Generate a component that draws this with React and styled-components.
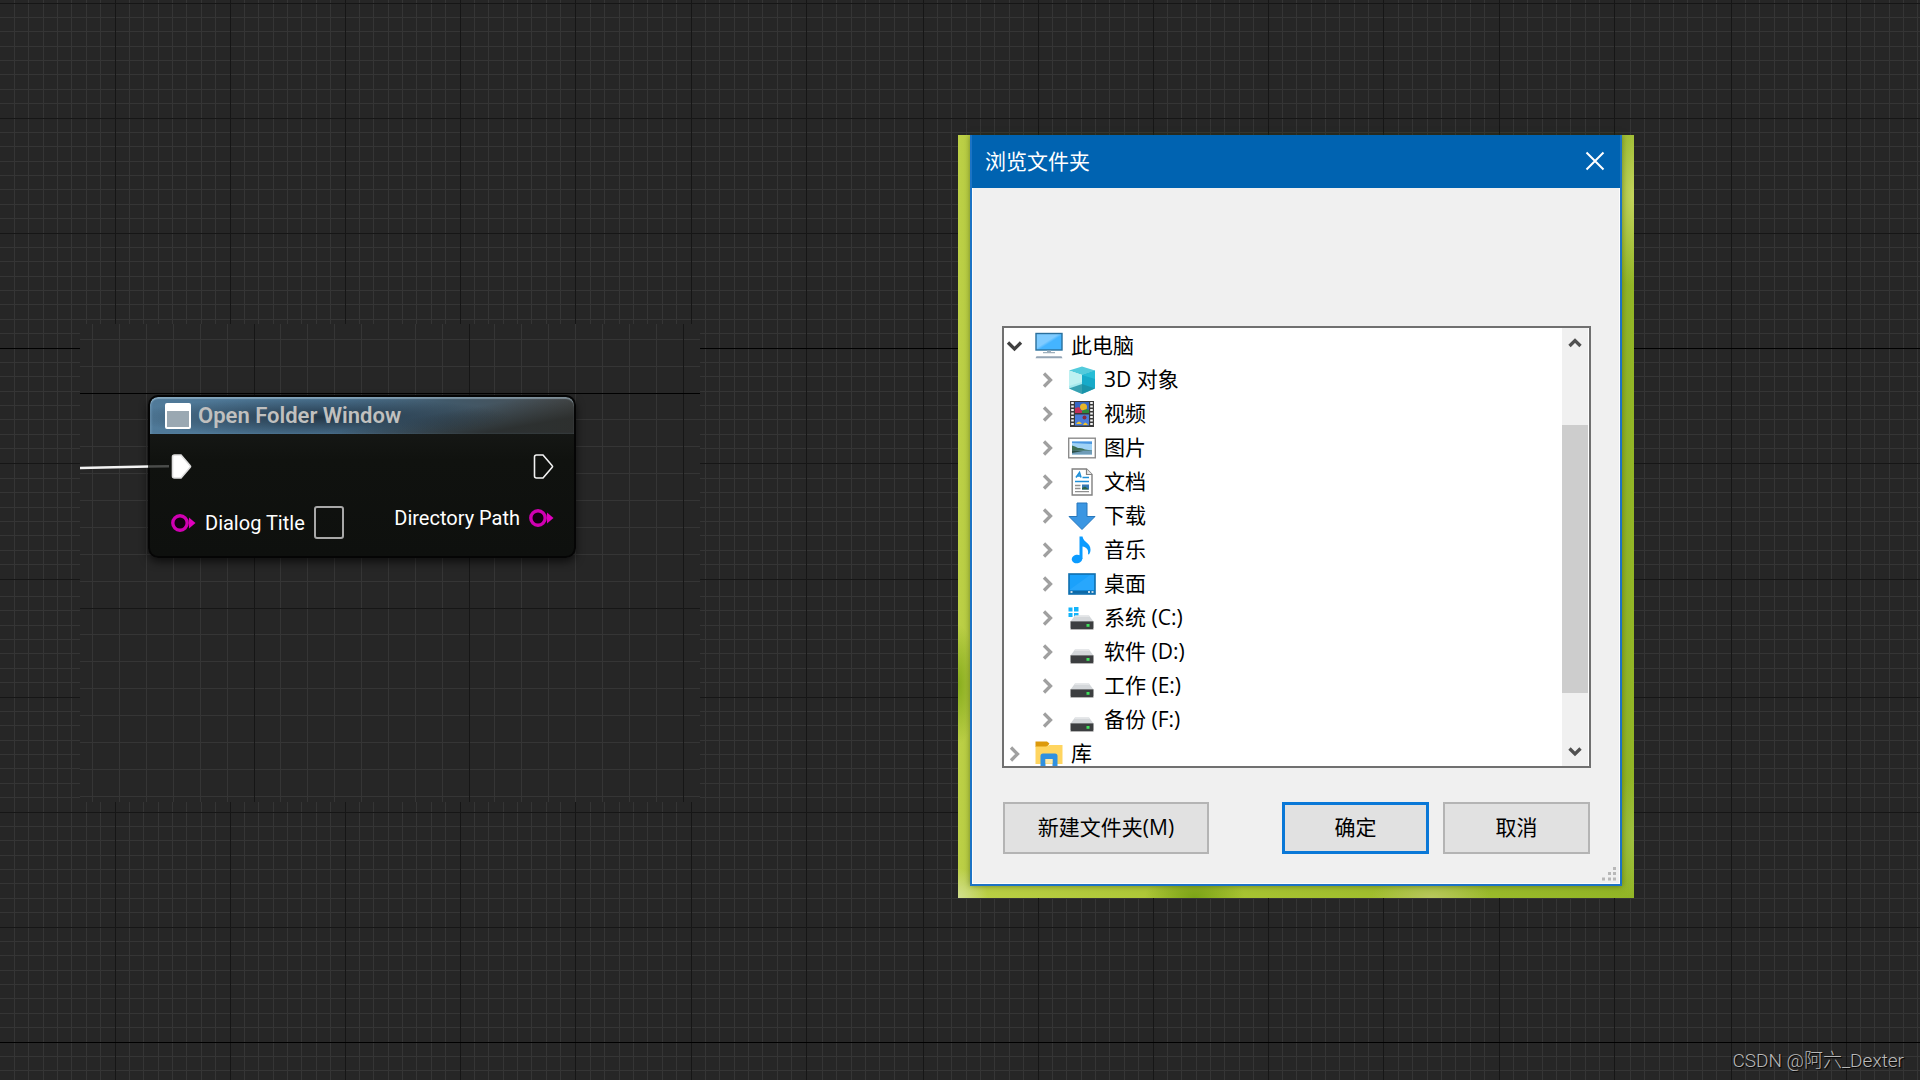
import React, { useState } from "react";
import styled, { createGlobalStyle } from "styled-components";

const GlobalStyle = createGlobalStyle`
    * {
        box-sizing: border-box;
    }

    body {
        margin: 0;
        background-color: #262626;
    }

    button,
    input {
        font: inherit;
        margin: 0;
        padding: 0;
    }
`;

/* ---------- graph background ---------- */

const GridSvg = styled.svg`
    position: absolute;
    inset: 0;
    width: 100%;
    height: 100%;
    z-index: -1;
    background-color: #262626;
`;

// each block ends on a major line and holds 8 cells
const withMinors = (majors, block) =>
    majors.flatMap((m) =>
        [1, 2, 3, 4, 5, 6, 7].map((i) => m - block + Math.floor((block / 8) * i))
    );

function Grid({ xs, ys, axes, block }) {
    return (
        <GridSvg shapeRendering="crispEdges" aria-hidden="true">
            <g fill="#353535">
                {withMinors(xs, block).map((x) => (
                    <rect key={`x${x}`} x={x} y="0" width="1" height="100%" />
                ))}
                {withMinors(ys, block).map((y) => (
                    <rect key={`y${y}`} x="0" y={y} width="100%" height="1" />
                ))}
            </g>
            <g fill="#161616">
                {xs.map((x) => (
                    <rect key={`x${x}`} x={x} y="0" width="1" height="100%" />
                ))}
                {ys.map((y) => (
                    <rect
                        key={`y${y}`}
                        x="0"
                        y={y}
                        width="100%"
                        height="1"
                        fill={axes.includes(y) ? "#000" : undefined}
                    />
                ))}
            </g>
        </GridSvg>
    );
}

const STAGE_X = [
    115, 230, 345, 460, 575, 691, 806, 923, 1038, 1153, 1268, 1383, 1499, 1614,
    1731, 1846, 1961, 2077, 2192, 2307, 2423, 2538, 2653,
];
const STAGE_Y = [
    3, 118, 233, 348, 463, 579, 697, 812, 927, 1042, 1157, 1273, 1388, 1503,
];
const PANEL_X = [174, 389, 603, 818];
const PANEL_Y = [69, 284, 499];

const Stage = styled.main`
    position: relative;
    z-index: 0;
    display: flex;
    justify-content: space-between;
    align-items: flex-start;
    min-height: 100vh;
    padding: 135px 286px 60px 80px;
    overflow: hidden;
`;

const GraphPanel = styled.section`
    position: relative;
    z-index: 0;
    flex: 0 1 620px;
    min-height: 478px;
    margin-top: 189px;
    padding: 71px 68px;
    font-family: Roboto, sans-serif;
`;

const Wire = styled.svg`
    position: absolute;
    left: 0;
    top: 136px;
    width: 90px;
    height: 14px;
`;

/* ---------- blueprint node ---------- */

const Node = styled.article`
    width: 428px;
    max-width: 100%;
    border: 2px solid #050505;
    border-radius: 10px;
    background: linear-gradient(#1c1e1c, #10120f 40%, #0e100e);
    box-shadow: 0 4px 8px rgba(0, 0, 0, 0.6);
    overflow: hidden;
`;

const NodeHeader = styled.header`
    display: flex;
    align-items: center;
    gap: 7px;
    height: 37px;
    padding: 1px 0 0 15px;
    border-radius: 8px 8px 0 0;
    background: radial-gradient(
            ellipse 190px 20px at 40% 55%,
            rgba(22, 34, 46, 0.75),
            transparent
        ),
        linear-gradient(170deg, transparent 60%, rgba(38, 40, 38, 0.8) 85%),
        linear-gradient(90deg, #507a99, #4a7290 45%, #41596a 70%, #4a4e50);
    box-shadow: inset 0 2px 1px rgba(190, 215, 230, 0.45),
        inset 2px 0 2px rgba(130, 170, 200, 0.3);
`;

const NodeTitle = styled.h1`
    margin: 0;
    color: #c0c0bf;
    font-size: 22px;
    font-weight: 600;
    line-height: 26px;
    white-space: nowrap;
`;

const NodeBody = styled.div`
    display: flex;
    justify-content: space-between;
    padding: 20px 20px 17px 21px;
`;

const PinColumn = styled.div`
    display: flex;
    flex-direction: column;
    align-items: ${({ $end }) => ($end ? "flex-end" : "flex-start")};
    gap: 27px;
`;

const Pin = styled.label`
    display: flex;
    align-items: center;
    gap: 9px;
    color: #fff;
    font-size: 20px;
    line-height: 24px;
    white-space: nowrap;
`;

const PinInput = styled.input`
    width: 30px;
    height: 33px;
    border: 2px solid #a8a8a8;
    border-radius: 3px;
    background: transparent;
    color: #fff;
    outline: none;
`;

const WindowGlyph = () => (
    <svg width="26" height="26" viewBox="0 0 26 26">
        <rect x="1" y="1" width="24" height="24" rx="1" fill="#9aa8b2" stroke="#fff" strokeWidth="2" />
        <rect x="1" y="1" width="24" height="7" fill="#fff" />
    </svg>
);

const ExecPin = ({ filled }) => (
    <svg width="21" height="25" viewBox="0 0 21 25">
        <path
            d="M1.5 3Q1.5 1 3.500 1H10L19 11.500Q20 12.500 19 13.500L10 24H3.500Q1.500 24 1.500 22Z"
            fill={filled ? "#fff" : "none"}
            stroke={filled ? "#ddd" : "#f2f2f2"}
            strokeWidth="1.6"
        />
    </svg>
);

const StringPin = () => (
    <svg width="25" height="20" viewBox="0 0 25 20">
        <path d="M18 4.500L24.500 10L18 15.500Z" fill="#e000be" />
        <circle cx="9" cy="10" r="7.200" fill="#120010" stroke="#d000b2" strokeWidth="3.400" />
    </svg>
);

/* ---------- folder dialog ---------- */

const Wallpaper = styled.section`
    flex: 0 1 676px;
    padding: 0 12px 12px;
    background: radial-gradient(ellipse 26px 60px at 100% 92%, #9fc040, transparent),
        radial-gradient(ellipse 40px 90px at 100% 8%, #c3d45c, transparent),
        radial-gradient(ellipse 30px 30px at 0% 100%, #d3e090, transparent),
        radial-gradient(ellipse 18px 60px at 0% 72%, #86ac1c, transparent),
        radial-gradient(ellipse 50px 30px at 35% 100%, #7ba316, transparent),
        radial-gradient(ellipse 60px 26px at 70% 100%, #b9c85e, transparent),
        linear-gradient(90deg, #bcd046, #a9c432 40%, #92b526);
    font-family: "Open Sans", "Noto Sans CJK SC", sans-serif;
    font-size: 21px;
    line-height: 30px;
`;

const Dialog = styled.div`
    position: relative;
    border: 2px solid #1c73c4;
    border-top: 0;
    background-color: #f0f0f0;
    box-shadow: 0 0 6px rgba(40, 60, 0, 0.5);
`;

const TitleBar = styled.header`
    display: flex;
    justify-content: space-between;
    align-items: center;
    height: 53px;
    padding: 0 15px 2px 13px;
    background-color: #0063b1;
    color: #fff;
`;

const DialogTitle = styled.h2`
    margin: 0;
    font-size: inherit;
    font-weight: 400;
`;

const CloseButton = styled.button`
    display: flex;
    border: 0;
    background: none;
    color: #fff;
`;

const DialogBody = styled.div`
    padding: 138px 28px 29px 29px;
    border: solid #fcfcfc;
    border-width: 0 1px 1px;
`;

const TreeBox = styled.div`
    display: flex;
    height: 442px;
    border: 2px solid #707070;
    background-color: #fff;
    overflow: hidden;
`;

const Tree = styled.ul`
    flex: 1;
    margin: 0;
    padding: 1px 0 0;
    list-style: none;
`;

const TreeRow = styled.li`
    display: flex;
    align-items: center;
    height: 34px;
    padding-left: ${({ $level }) => ($level ? 34 : 1)}px;
    color: #000;
`;

const Toggle = styled.button`
    display: flex;
    margin-right: 10px;
    border: 0;
    background: none;
    color: ${({ $open }) => ($open ? "#404040" : "#a0a0a0")};
`;

const RowIcon = styled.svg`
    width: 28px;
    height: 28px;
    margin-right: 8px;
    flex: none;
`;

const RowName = styled.span`
    padding-bottom: 2px;
`;

const ScrollBar = styled.div`
    display: flex;
    flex-direction: column;
    width: 26px;
    margin-right: 1px;
    background-color: #f0f0f0;
`;

const ScrollArrow = styled.button`
    display: flex;
    justify-content: center;
    align-items: center;
    height: 30px;
    border: 0;
    background: none;
    color: #505050;
`;

const ScrollTrack = styled.div`
    flex: 1;
    display: grid;
    grid-template-rows: 67fr 268fr 43fr;
`;

const ScrollThumb = styled.div`
    grid-row: 2;
    background-color: #cdcdcd;
`;

const Actions = styled.footer`
    display: flex;
    gap: 14px;
    margin: 34px 1px 0;
`;

const ActionButton = styled.button`
    width: ${({ $wide }) => ($wide ? 206 : 147)}px;
    height: 52px;
    margin-right: ${({ $wide }) => ($wide ? "auto" : 0)};
    padding-bottom: 2px;
    border: ${({ $primary }) => ($primary ? "3px solid #0a78d7" : "2px solid #b4b4b4")};
    background-color: #e1e1e1;
    color: #000;
`;

const Grip = styled.svg`
    position: absolute;
    right: 4px;
    bottom: 3px;
`;

const Watermark = styled.small`
    position: absolute;
    right: 16px;
    bottom: 6px;
    color: #b8b8b8;
    font-family: Roboto, "Noto Sans CJK SC", sans-serif;
    font-size: 19px;
    font-weight: 300;
    line-height: 26px;
    text-shadow: 1px 1px 1px #000;
`;

const Chevron = ({ dir }) => {
    const paths = {
        right: "M6 3.500L12.500 10L6 16.500",
        down: "M3 6.500L9.500 13L16 6.500",
        up: "M4.500 13L10 7.500L15.500 13",
        scrollDown: "M4.500 7.500L10 13L15.500 7.500",
    };
    return (
        <svg width="20" height="20" viewBox="0 0 20 20">
            <path d={paths[dir]} fill="none" stroke="currentColor" strokeWidth="3.300" />
        </svg>
    );
};

const Drive = () => (
    <>
        <path d="M7 11.500H21L25.500 17.500H2.500Z" fill="#d4d7da" />
        <path d="M7 11.500H21L22 13H6Z" fill="#e3e5e7" />
        <rect x="2.500" y="17" width="23" height="8" rx="0.800" fill="#3c3e40" />
        <path d="M2.500 25.500H25.500" stroke="#b5b5b5" />
        <path d="M3 17.500H25" stroke="#77797b" />
        <rect x="18.500" y="20" width="3" height="2.800" fill="#3fe05a" />
    </>
);

const icons = {
    pc: (
        <>
            <defs>
                <linearGradient id="screen" x1="0" y1="0" x2="1" y2="1">
                    <stop offset="0.45" stopColor="#7fcbff" />
                    <stop offset="0.55" stopColor="#44b4ff" />
                </linearGradient>
            </defs>
            <rect x="1" y="1.500" width="26" height="16.500" fill="url(#screen)" stroke="#2a6f9c" strokeWidth="1.400" />
            <path d="M12 18.500H16V20H20V21.300H8V20H12Z" fill="#9fb0bd" />
            <path d="M1.500 24.300H26.500L27.500 26.300H0.500Z" fill="#94a5b5" />
        </>
    ),
    cube: (
        <>
            <path d="M14 0.500L27 4.500L14 9L1 4.500Z" fill="#53cbdc" />
            <path d="M1 4.500L14 9V28L1 22.500Z" fill="#a6e9ee" />
            <path d="M1 4.500L14 9V16L1 20Z" fill="#c9f3f4" opacity="0.7" />
            <path d="M14 9L27 4.500V22.500L14 28Z" fill="#17aac9" />
            <path d="M14 9L27 4.500V13Z" fill="#27bdd6" />
            <path d="M1 22.500L14 18L27 22.500L14 28Z" fill="#1c8fa3" opacity="0.8" />
        </>
    ),
    video: (
        <>
            <rect x="2" y="1" width="24" height="26" fill="#3a3a3a" />
            <path d="M4.500 2V26M23.500 2V26" stroke="#f4f4f4" strokeWidth="2.600" strokeDasharray="2 1.500" />
            <rect x="7" y="2" width="14" height="11" fill="#3566c4" />
            <rect x="7" y="14.500" width="14" height="11" fill="#4a7ddb" />
            <circle cx="15.500" cy="7" r="3.500" fill="#e6b52a" />
            <path d="M7 8L11 7L14 11V13H7Z" fill="#c22f5a" />
            <path d="M14 11Q18 8 21 10V13H14Z" fill="#2f8a3c" />
            <circle cx="16.500" cy="17.500" r="2" fill="#8a2b3c" />
            <path d="M8 24Q11 19 14 24ZM15 25Q17 20 20 25Z" fill="#f0c22e" />
        </>
    ),
    picture: (
        <>
            <rect x="0.700" y="4.200" width="26.600" height="19.600" fill="#fff" stroke="#8c8c8c" strokeWidth="1.400" />
            <rect x="4" y="7.500" width="20" height="13" fill="#9fd2f6" />
            <path d="M4 7.500H24V10L4 9Z" fill="#4b97e0" />
            <path d="M4 11.500Q7 12 10 14Q14 13.500 17 15.500L24 16.500V17H4Z" fill="#3e6f55" />
            <rect x="4" y="16.500" width="20" height="4" fill="#6f9cb8" />
            <path d="M4 16.500L15 17L4 19Z" fill="#2d5148" />
        </>
    ),
    document: (
        <>
            <path d="M4.200 1H18.500L24 6.500V27H4.200Z" fill="#fff" stroke="#808080" strokeWidth="1.400" />
            <path d="M18.500 1V6.500H24" fill="#e8e8e8" stroke="#808080" strokeWidth="1.200" />
            <path d="M8 9.500L11.500 4.500L13 9.500M9.500 8H13" fill="none" stroke="#1e8fd8" strokeWidth="1.600" />
            <path d="M14.500 9.500H21M7 13.500H21" stroke="#1e8fd8" strokeWidth="1.500" />
            <path d="M7 17.500H12.500M7 20.500H12.500M7 23.700H21" stroke="#909090" strokeWidth="1.300" />
            <rect x="14" y="16.500" width="7" height="5" fill="#3479b8" />
            <path d="M14 20L17 18.500L21 21.500H14Z" fill="#2c6446" />
        </>
    ),
    download: (
        <path
            d="M9 1H19V14.500H27L14 27.500L1 14.500H9Z"
            fill="#3b96e2"
            stroke="#2677bd"
            strokeLinejoin="round"
        />
    ),
    music: (
        <>
            <ellipse cx="9" cy="23" rx="5.300" ry="4.300" transform="rotate(-12 9 23)" fill="#0a9bff" />
            <path
                d="M11.500 0.500H14.500C15.500 6.500 22.500 7 22.500 13.500C22.500 15.500 22 17 21 18.500C20.500 18.500 20 18.300 20 18C21 13.500 18 11 14.500 10.500V23H11.500Z"
                fill="#0a9bff"
            />
        </>
    ),
    desktop: (
        <>
            <rect x="1" y="4" width="26" height="20" fill="#1ba1fb" stroke="#0f6fae" strokeWidth="1.600" />
            <path d="M2 19.500L22 5H26V20H2Z" fill="#35adff" opacity="0.5" />
            <rect x="1.500" y="20.500" width="25" height="3" fill="#0e69a6" />
            <path d="M2.500 22H4.500M20 22H22M23.500 22H25.500" stroke="#fff" strokeWidth="1.600" />
        </>
    ),
    system: (
        <>
            <path d="M0.500 3.500H4.500V7.500H0.500ZM6 3H10.500V7.500H6ZM0.500 9H4.500V13H0.500ZM6 9H10.500V13.500H6Z" fill="#12b4fb" />
            <Drive />
        </>
    ),
    drive: <Drive />,
    library: (
        <>
            <path d="M0.500 1.500H12L14.500 3.500L12 7H0.500Z" fill="#dd9a0c" />
            <path d="M0.500 6.500H11L14.500 5H27.500V24H0.500Z" fill="#ffd560" />
            <path d="M5.500 28V16Q5.500 13.500 8 13.500H20Q22.500 13.500 22.500 16V28H17.500V19H10.500V28Z" fill="#2f90e0" />
            <rect x="10.500" y="19" width="7" height="4.500" fill="#ffe9a8" />
        </>
    ),
};

const places = [
    { icon: "cube", name: "3D 对象" },
    { icon: "video", name: "视频" },
    { icon: "picture", name: "图片" },
    { icon: "document", name: "文档" },
    { icon: "download", name: "下载" },
    { icon: "music", name: "音乐" },
    { icon: "desktop", name: "桌面" },
    { icon: "system", name: "系统 (C:)" },
    { icon: "drive", name: "软件 (D:)" },
    { icon: "drive", name: "工作 (E:)" },
    { icon: "drive", name: "备份 (F:)" },
];

function TreeItem({ icon, name, level = 0, open = false, onToggle }) {
    return (
        <TreeRow $level={level}>
            <Toggle type="button" $open={open} aria-label={name} aria-expanded={open} onClick={onToggle}>
                <Chevron dir={open ? "down" : "right"} />
            </Toggle>
            <RowIcon viewBox="0 0 28 28">{icons[icon]}</RowIcon>
            <RowName>{name}</RowName>
        </TreeRow>
    );
}

function FolderDialog() {
    const [open, setOpen] = useState(true);

    return (
        <Wallpaper>
            <Dialog role="dialog" aria-labelledby="dialog-title">
                <TitleBar>
                    <DialogTitle id="dialog-title">浏览文件夹</DialogTitle>
                    <CloseButton type="button" aria-label="关闭">
                        <svg width="20" height="20" viewBox="0 0 20 20">
                            <path d="M1.500 1.500L18.500 18.500M18.500 1.500L1.500 18.500" stroke="currentColor" strokeWidth="2" />
                        </svg>
                    </CloseButton>
                </TitleBar>
                <DialogBody>
                    <TreeBox>
                        <Tree>
                            <TreeItem icon="pc" name="此电脑" open={open} onToggle={() => setOpen(!open)} />
                            {open &&
                                places.map((place) => (
                                    <TreeItem key={place.name} level={1} {...place} />
                                ))}
                            <TreeItem icon="library" name="库" />
                        </Tree>
                        <ScrollBar>
                            <ScrollArrow type="button" aria-label="向上">
                                <Chevron dir="up" />
                            </ScrollArrow>
                            <ScrollTrack>
                                <ScrollThumb />
                            </ScrollTrack>
                            <ScrollArrow type="button" aria-label="向下">
                                <Chevron dir="scrollDown" />
                            </ScrollArrow>
                        </ScrollBar>
                    </TreeBox>
                    <Actions>
                        <ActionButton type="button" $wide>
                            新建文件夹(M)
                        </ActionButton>
                        <ActionButton type="button" $primary>
                            确定
                        </ActionButton>
                        <ActionButton type="button">取消</ActionButton>
                    </Actions>
                </DialogBody>
                <Grip width="14" height="14" viewBox="0 0 14 14" fill="#b8b8b8">
                    <path d="M11 0H14V3H11ZM6 5H9V8H6ZM11 5H14V8H11ZM0 10.500H3V13.500H0ZM6 10.500H9V13.500H6ZM11 10.500H14V13.500H11Z" />
                </Grip>
            </Dialog>
        </Wallpaper>
    );
}

function BlueprintNode() {
    return (
        <Node>
            <NodeHeader>
                <WindowGlyph />
                <NodeTitle>Open Folder Window</NodeTitle>
            </NodeHeader>
            <NodeBody>
                <PinColumn>
                    <ExecPin filled />
                    <Pin>
                        <StringPin />
                        Dialog Title
                        <PinInput type="text" />
                    </Pin>
                </PinColumn>
                <PinColumn $end>
                    <ExecPin />
                    <Pin as="div">
                        Directory Path
                        <StringPin />
                    </Pin>
                </PinColumn>
            </NodeBody>
        </Node>
    );
}

function App() {
    return (
        <>
            <GlobalStyle />
            <Stage>
                <Grid xs={STAGE_X} ys={STAGE_Y} axes={[348, 1042]} block={115} />
                <GraphPanel>
                    <Grid xs={PANEL_X} ys={PANEL_Y} axes={[69]} block={215} />
                    <BlueprintNode />
                    <Wire viewBox="0 0 90 14">
                        <path d="M0 8L68 6.500" stroke="#f4f4f4" strokeWidth="2.600" />
                        <path d="M68 6.500L89 6.300" stroke="#4a4c4a" strokeWidth="2.400" />
                    </Wire>
                </GraphPanel>
                <FolderDialog />
                <Watermark>CSDN @阿六_Dexter</Watermark>
            </Stage>
        </>
    );
}

export default App;
